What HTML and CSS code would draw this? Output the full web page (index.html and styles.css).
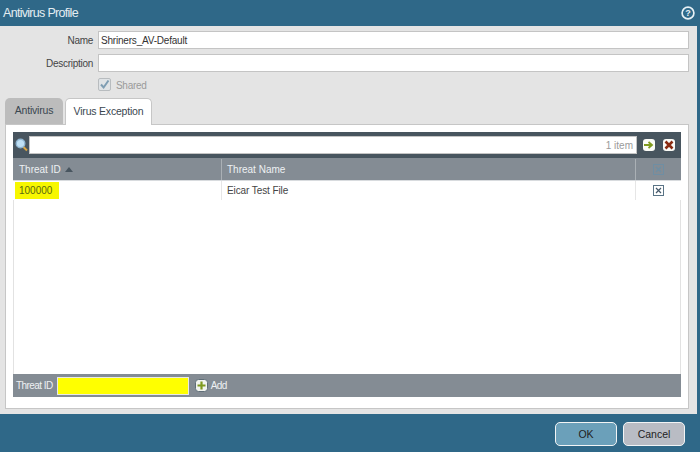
FILE: index.html
```html
<!DOCTYPE html>
<html lang="en">
<head>
<meta charset="utf-8">
<title>Antivirus Profile</title>
<link rel="stylesheet" href="styles.css">
</head>
<body>
<div class="dialog">
  <header class="titlebar">
    <span class="title">Antivirus Profile</span>
    <svg class="help" width="14" height="14" viewBox="0 0 14 14"><circle cx="7" cy="7" r="5.9" fill="#2f6a8a" stroke="#e6f0f5" stroke-width="1.7"/><text x="7" y="10.2" text-anchor="middle" class="help-q">?</text></svg>
  </header>
  <main class="panel">
    <div class="form">
      <div class="field"><label class="label">Name</label><div class="input">Shriners_AV-Default</div></div>
      <div class="field"><label class="label">Description</label><div class="input"></div></div>
      <div class="field shared-row"><span class="label"></span>
        <svg class="check" width="13" height="13" viewBox="0 0 13 13"><rect x=".5" y=".5" width="12" height="12" rx="1.5" fill="#dfe3e6" stroke="#b8bcbf"/><path d="M3 6.5l2.6 3L10.5 2.5" fill="none" stroke="#7d9db3" stroke-width="2"/></svg>
        <span class="shared">Shared</span>
      </div>
    </div>
    <nav class="tabs">
      <div class="tab">Antivirus</div>
      <div class="tab active">Virus Exception</div>
    </nav>
    <section class="tabbody">
      <div class="grid">
        <div class="toolbar">
          <svg class="search" width="13" height="14" viewBox="0 0 13 14"><line x1="8" y1="8.5" x2="12" y2="12.5" stroke="#d9a441" stroke-width="2"/><circle cx="5.5" cy="5.5" r="4.3" fill="#bfe0f5" stroke="#8fb4d0" stroke-width="1.4"/></svg>
          <div class="filter">1 item</div>
          <span class="tool"><svg width="10" height="10" viewBox="0 0 10 10"><path d="M0 5h7M4.5 2l3.5 3-3.5 3" fill="none" stroke="#7f9a1e" stroke-width="1.8"/></svg></span>
          <span class="tool"><svg width="10" height="10" viewBox="0 0 10 10"><path d="M1.5 1.5l7 7M8.5 1.5l-7 7" fill="none" stroke="#8a2a10" stroke-width="2.6"/></svg></span>
        </div>
        <div class="row head">
          <div class="c1">Threat ID <i class="sort"></i></div>
          <div class="c2">Threat Name</div>
          <div class="c3"><svg width="11" height="11" viewBox="0 0 11 11"><rect x=".5" y=".5" width="10" height="10" fill="none" stroke="#6f8ea3"/><path d="M3 3l5 5M8 3l-5 5" stroke="#6f8ea3" stroke-width="1.5"/></svg></div>
        </div>
        <div class="row body">
          <div class="c1"><span class="mark">100000</span></div>
          <div class="c2">Eicar Test File</div>
          <div class="c3"><svg width="11" height="11" viewBox="0 0 11 11"><rect x=".5" y=".5" width="10" height="10" fill="#fff" stroke="#5a7486"/><path d="M3 3l5 5M8 3l-5 5" stroke="#45596a" stroke-width="1.2"/></svg></div>
        </div>
        <div class="spacer"></div>
        <div class="addbar">
          <span class="narrow">Threat ID</span>
          <div class="yellow"></div>
          <svg class="plus" width="13" height="13" viewBox="0 0 13 13"><rect x=".5" y=".5" width="12" height="12" rx="3" fill="#f1f3ee" stroke="#5f6e78"/><path d="M6.5 2.5v8M2.5 6.5h8" stroke="#7f9a1e" stroke-width="2.2"/></svg>
          <span class="narrow">Add</span>
        </div>
      </div>
    </section>
  </main>
  <footer class="footer">
    <button class="btn ok">OK</button>
    <button class="btn cancel">Cancel</button>
  </footer>
</div>
</body>
</html>
```
FILE: styles.css
```css
* { box-sizing: border-box; }
html, body { margin: 0; padding: 0; }
body { width: 700px; height: 452px; overflow: hidden; font-family: "Liberation Sans", Arial, sans-serif; font-size: 10px; color: #333; }
.dialog { display: flex; flex-direction: column; width: 700px; height: 452px; background: #2f6888; }
.titlebar { flex: 0 0 26px; display: flex; align-items: center; justify-content: space-between; padding: 0 5px 1px 3px; }
.title { font-size: 12.5px; color: #e4edf2; letter-spacing: -.7px; }
.help-q { font: bold 9px "Liberation Sans", sans-serif; fill: #e6f0f5; }
.panel { flex: 0 0 388px; width: 697px; background: #e4e4e4; padding: 5px 8px 5px 5px; display: flex; flex-direction: column; }
.form { display: flex; flex-direction: column; gap: 5px; }
.field { display: flex; align-items: center; height: 18px; }
.label { flex: 0 0 93px; text-align: right; padding-right: 5px; color: #444; letter-spacing: -.28px; }
.input { flex: 1; height: 18px; background: #fff; border: 1px solid #c4c4c4; padding: 2px 2px 0; color: #333; line-height: 14px; letter-spacing: -.2px; }
.shared-row { height: 15px; }
.check { margin-right: 5px; }
.shared { color: #9a9a9a; letter-spacing: -.3px; padding-top: 2px; }
.tabs { display: flex; gap: 2px; margin-top: 6px; height: 27px; position: relative; z-index: 1; margin-bottom: -1px; }
.tab { width: 58px; height: 26px; background: #bcbcbc; border-radius: 5px 5px 0 0; text-align: center; line-height: 25px; color: #3a4750; font-size: 10.5px; letter-spacing: -.2px; }
.tab.active { width: 87px; height: 27px; background: #fff; border: 1px solid #c6c6c6; border-bottom: 0; }
.tabbody { flex: 1; background: #fff; border: 1px solid #c6c6c6; padding: 7px 7px 11px; display: flex; }
.grid { flex: 1; display: flex; flex-direction: column; }
.toolbar { flex: 0 0 26px; background: #48555f; display: flex; align-items: center; padding: 0 6px 0 2px; }
.search { margin-right: 1px; }
.filter { width: 608px; height: 18px; background: #fff; border: 1px solid #c4c4c4; text-align: right; padding-right: 3px; line-height: 18px; color: #9a9a9a; }
.tool { width: 12px; height: 12px; background: #fbfbf7; border-radius: 3px; display: flex; align-items: center; justify-content: center; margin-left: 6px; }
.tool + .tool { margin-left: 8px; }
.row { display: flex; }
.head { flex: 0 0 23px; background: #848c94; color: #eef1f3; border-bottom: 1px solid #d8dbde; padding-top: 1px; }
.body { flex: 0 0 19px; background: #fff; color: #444; letter-spacing: -.1px; }
.c1, .c2 { display: flex; align-items: center; }
.c1 { flex: 0 0 209px; padding-left: 6px; border-right: 1px solid #aab0b5; }
.c2 { flex: 0 0 414px; padding-left: 5px; border-right: 1px solid #aab0b5; }
.c3 { flex: 1; display: flex; align-items: center; justify-content: center; }
.body .c1, .body .c2 { border-right-color: #e6e6e6; }
.sort { display: inline-block; width: 0; height: 0; margin-left: 4px; border: 4px solid transparent; border-top: 0; border-bottom: 5px solid #48555f; }
.body .c1 { padding-left: 2px; }
.mark { background: #f7f700; padding: 0 4px; width: 44px; height: 17px; line-height: 17px; color: #5a6a10; letter-spacing: 0; }
.spacer { flex: 1; background: #fff; border-left: 1px solid #e2e2e2; border-right: 1px solid #e2e2e2; }
.addbar { flex: 0 0 23px; background: #848c94; color: #eef1f3; display: flex; align-items: center; padding-left: 3px; }
.narrow { letter-spacing: -.55px; }
.yellow { width: 132px; height: 18px; margin: 0 6px 0 4px; background: #ffff00; border: 1px solid #e8e8e8; }
.plus { margin-right: 3px; }
.footer { flex: 1; display: flex; justify-content: flex-end; align-items: flex-start; gap: 6px; padding: 8px 15px 0 0; }
.btn { width: 62px; height: 24px; border: 1px solid #f2f4f5; border-radius: 5px; font: 10.5px "Liberation Sans", Arial, sans-serif; color: #222; padding: 0; }
.ok { background: #6ba0ba; }
.cancel { background: #b9bcc4; }
```
